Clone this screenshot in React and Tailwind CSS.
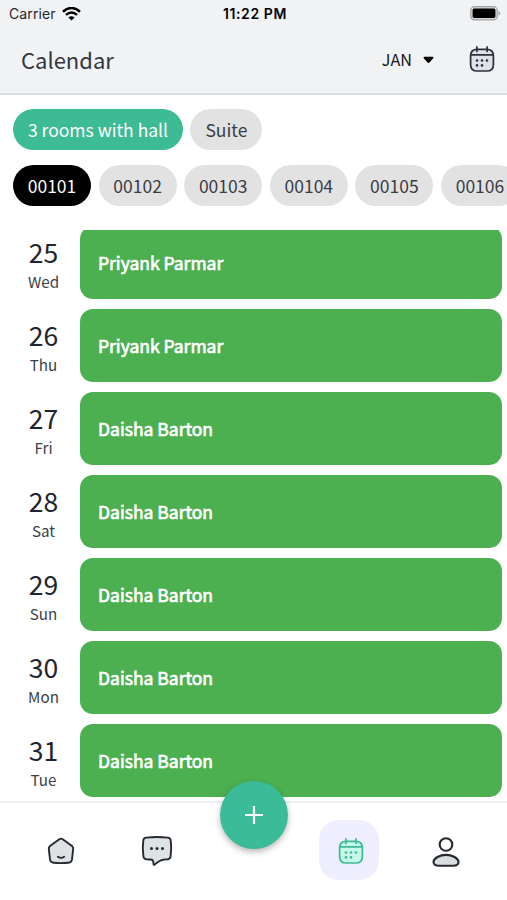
const ROOM_TYPES = ['3 rooms with hall', 'Suite'];
const ROOMS = ['00101', '00102', '00103', '00104', '00105', '00106'];

const BOOKINGS = [
  { date: 25, day: 'Wed', guest: 'Priyank Parmar' },
  { date: 26, day: 'Thu', guest: 'Priyank Parmar' },
  { date: 27, day: 'Fri', guest: 'Daisha Barton' },
  { date: 28, day: 'Sat', guest: 'Daisha Barton' },
  { date: 29, day: 'Sun', guest: 'Daisha Barton' },
  { date: 30, day: 'Mon', guest: 'Daisha Barton' },
  { date: 31, day: 'Tue', guest: 'Daisha Barton' },
];

const CalendarIcon = ({ stroke, fill }) => (
  <svg width="28" height="28" viewBox="0 0 28 28" fill="none" stroke={stroke} strokeWidth="1.7" strokeLinecap="round">
    <path
      d="M2.6 11c0-4.800 2.200-6.600 6.600-6.600h9.600c4.400 0 6.600 1.800 6.600 6.600v8.400c0 4.800-2.200 6.600-6.600 6.600H9.200c-4.400 0-6.600-1.800-6.600-6.600Z"
      fill={fill}
    />
    <path d="M2.800 9.800h22.400M8.900 1.900v4.600M19.100 1.900v4.600" />
    <g fill={stroke} stroke="none">
      <circle cx="9" cy="15.500" r="1.300" />
      <circle cx="14" cy="15.500" r="1.300" />
      <circle cx="19" cy="15.500" r="1.300" />
      <circle cx="9" cy="20.400" r="1.300" />
      <circle cx="14" cy="20.400" r="1.300" />
    </g>
  </svg>
);

const HomeIcon = () => (
  <svg width="30" height="30" viewBox="0 0 30 30" fill="none" stroke="#25292f" strokeWidth="1.9" strokeLinecap="round" strokeLinejoin="round">
    <path
      d="M13.300 3.200Q15 2 16.700 3.200L26 9.900Q27.400 11 27.200 12.800L26 23.400Q25.500 26.600 22.400 26.800Q15 27.400 7.600 26.800Q4.500 26.600 4 23.400L2.800 12.800Q2.600 11 4 9.900Z"
      fill="#dfe2e5"
    />
    <path d="M11.900 20.800q3.100 2.200 6.200 0" />
  </svg>
);

const ChatIcon = () => (
  <svg width="32" height="32" viewBox="0 0 32 32" fill="none" stroke="#25292f" strokeWidth="1.9" strokeLinecap="round" strokeLinejoin="round">
    <path
      d="M5.200 2.600Q16 1.300 26.800 2.600Q29.300 2.900 29.700 5.300Q30.800 13 29.600 21.400Q29.200 23.900 26.800 24.200Q22.800 24.300 19.600 25.500Q16.600 27 13.600 29.600Q12.500 30.200 12.500 28.800Q12.600 26 11.200 24.800Q8.500 24.200 5.200 24.200Q2.800 23.900 2.400 21.400Q1.200 13 2.300 5.300Q2.700 2.900 5.200 2.600Z"
      fill="#dde2e4"
    />
    <g fill="#25292f" stroke="none">
      <circle cx="10.500" cy="13.500" r="1.500" />
      <circle cx="16" cy="13.500" r="1.500" />
      <circle cx="21.500" cy="13.500" r="1.500" />
    </g>
  </svg>
);

const UserIcon = () => (
  <svg width="30" height="32" viewBox="0 0 30 32" fill="none" stroke="#25292f" strokeWidth="2.100">
    <circle cx="15" cy="8.500" r="6.300" fill="#fff" />
    <path
      d="M15 18.900C21 18.900 27.500 22 27.500 26C27.500 28.600 25.300 29.700 22 29.700H8C4.700 29.700 2.500 28.600 2.500 26C2.500 22 9 18.900 15 18.900Z"
      fill="#dadcdf"
    />
  </svg>
);

const WifiIcon = () => (
  <svg width="19" height="14" viewBox="0 0 19 14" fill="none" stroke="#000" strokeWidth="2.500">
    <path d="M1 4.700Q9.500-2.700 18 4.700" />
    <path d="M4 7.900Q9.500 3.200 15 7.900" />
    <path d="M9.500 13.600L6.400 10.500Q9.500 8 12.600 10.500Z" fill="#000" stroke="none" />
  </svg>
);

const BatteryIcon = () => (
  <svg width="31" height="15" viewBox="0 0 31 15">
    <rect x="0.700" y="0.700" width="26.600" height="13.200" rx="3.800" fill="#d2d3d5" stroke="#a5a6a8" strokeWidth="1.200" />
    <rect x="2.600" y="2.600" width="22.800" height="9.400" rx="1.800" fill="#000" />
    <path d="M28.500 5v4.600q1.800-.7 1.800-2.300t-1.800-2.300Z" fill="#a5a6a8" />
  </svg>
);

const Chip = ({ label, className }) => (
  <div className={`h-[41.500px] shrink-0 rounded-full flex items-center justify-center text-[17.500px] leading-none ${className}`}>
    {label}
  </div>
);

const BookingRow = ({ booking }) => (
  <div className="flex h-[73px] shrink-0">
    <div className="w-20 pl-[7px] flex flex-col items-center text-[#22252e]">
      <span className="mt-[11px] h-[30px] text-[26.500px] leading-[30px]">{booking.date}</span>
      <span className="mt-[2px] h-[24px] text-[15.200px] leading-[24px] text-[#3c3f48]">{booking.day}</span>
    </div>
    <div className="w-[422px] rounded-[13px] bg-[#4caf50] pl-[18px] flex items-center text-white text-[17.500px] leading-none [-webkit-text-stroke:0.700px_white]">
      {booking.guest}
    </div>
  </div>
);

export default function App() {
  return (
    <div className="w-[507px] h-[900px] overflow-hidden bg-white flex flex-col font-['Noto_Sans_CJK_SC',sans-serif] whitespace-nowrap">
      <header className="h-[95px] shrink-0 bg-[#f0f2f4] border-b-2 border-[#dcdee0]">
        <div className="h-[27px] pl-[9px] pr-[6px] grid grid-cols-3 items-center font-['Inter',sans-serif] text-[14px] text-black">
          <div className="flex items-center gap-[6px] tracking-[0.100px] text-[#25272a]">
            Carrier
            <WifiIcon />
          </div>
          <div className="text-center font-semibold tracking-[0.600px]">11:22 PM</div>
          <div className="flex justify-end">
            <BatteryIcon />
          </div>
        </div>
        <div className="h-[64px] pl-[21px] pr-[11px] flex items-center text-[#33363f]">
          <h1 className="text-[22px] leading-none">Calendar</h1>
          <div className="ml-auto flex items-center text-[#15171b]">
            <span className="text-[16.200px] leading-none">JAN</span>
            <svg className="ml-[11px] mr-[34px] mt-px" width="11" height="8" viewBox="0 0 11 8">
              <path d="M1.500.8h8q1.600.3.500 1.700L6.500 6.500q-1 .9-2 0L1 2.500Q-.1 1.100 1.500.8Z" />
            </svg>
            <CalendarIcon stroke="#2c303a" fill="#e0e2ea" />
          </div>
        </div>
      </header>

      <section className="h-[134.500px] shrink-0 pt-[13.500px] pl-[13px] flex flex-col gap-[14.500px] overflow-hidden">
        <div className="flex gap-[7.400px]">
          <Chip label={ROOM_TYPES[0]} className="w-[170px] bg-[#3cbb95] text-white" />
          <Chip label={ROOM_TYPES[1]} className="w-[72px] bg-[#e2e2e3] text-[#3a3d43]" />
        </div>
        <div className="flex gap-[7.600px]">
          {ROOMS.map((room, i) => (
            <Chip
              key={room}
              label={room}
              className={i === 0 ? 'w-[78px] bg-black text-white' : 'w-[78px] bg-[#e2e2e3] text-[#3a3d43]'}
            />
          ))}
        </div>
      </section>

      {/* list is scrolled a few pixels, so the first card is cut at the top */}
      <main className="h-[571.500px] shrink-0 overflow-hidden">
        <div className="-mt-[3.500px] flex flex-col gap-[10px]">
          {BOOKINGS.map((booking) => (
            <BookingRow key={booking.date} booking={booking} />
          ))}
        </div>
      </main>

      <nav className="relative h-[99px] pb-[3px] shrink-0 border-t-2 border-[#f0f0f1] bg-white flex items-center">
        <div className="w-[30px] ml-[46px] pt-[2px]">
          <HomeIcon />
        </div>
        <div className="w-[32px] ml-[65px] pt-[2px]">
          <ChatIcon />
        </div>
        <div className="ml-[146px] w-[60px] h-[60px] rounded-[20px] bg-[#efeefe] flex items-center justify-center pl-[4px] pt-[1px]">
          <CalendarIcon stroke="#3cba97" fill="#c6f8e8" />
        </div>
        <div className="ml-[52px] pt-[3px]">
          <UserIcon />
        </div>
        <button className="absolute left-[220px] -top-[22px] size-[68px] rounded-full bg-[#3cbb98] shadow-[0_3px_6px_rgba(0,0,0,0.280)] flex items-center justify-center">
          <svg width="20" height="20" viewBox="0 0 20 20" stroke="#fff" strokeWidth="2.200">
            <path d="M10 1v18M1 10h18" />
          </svg>
        </button>
      </nav>
    </div>
  );
}
